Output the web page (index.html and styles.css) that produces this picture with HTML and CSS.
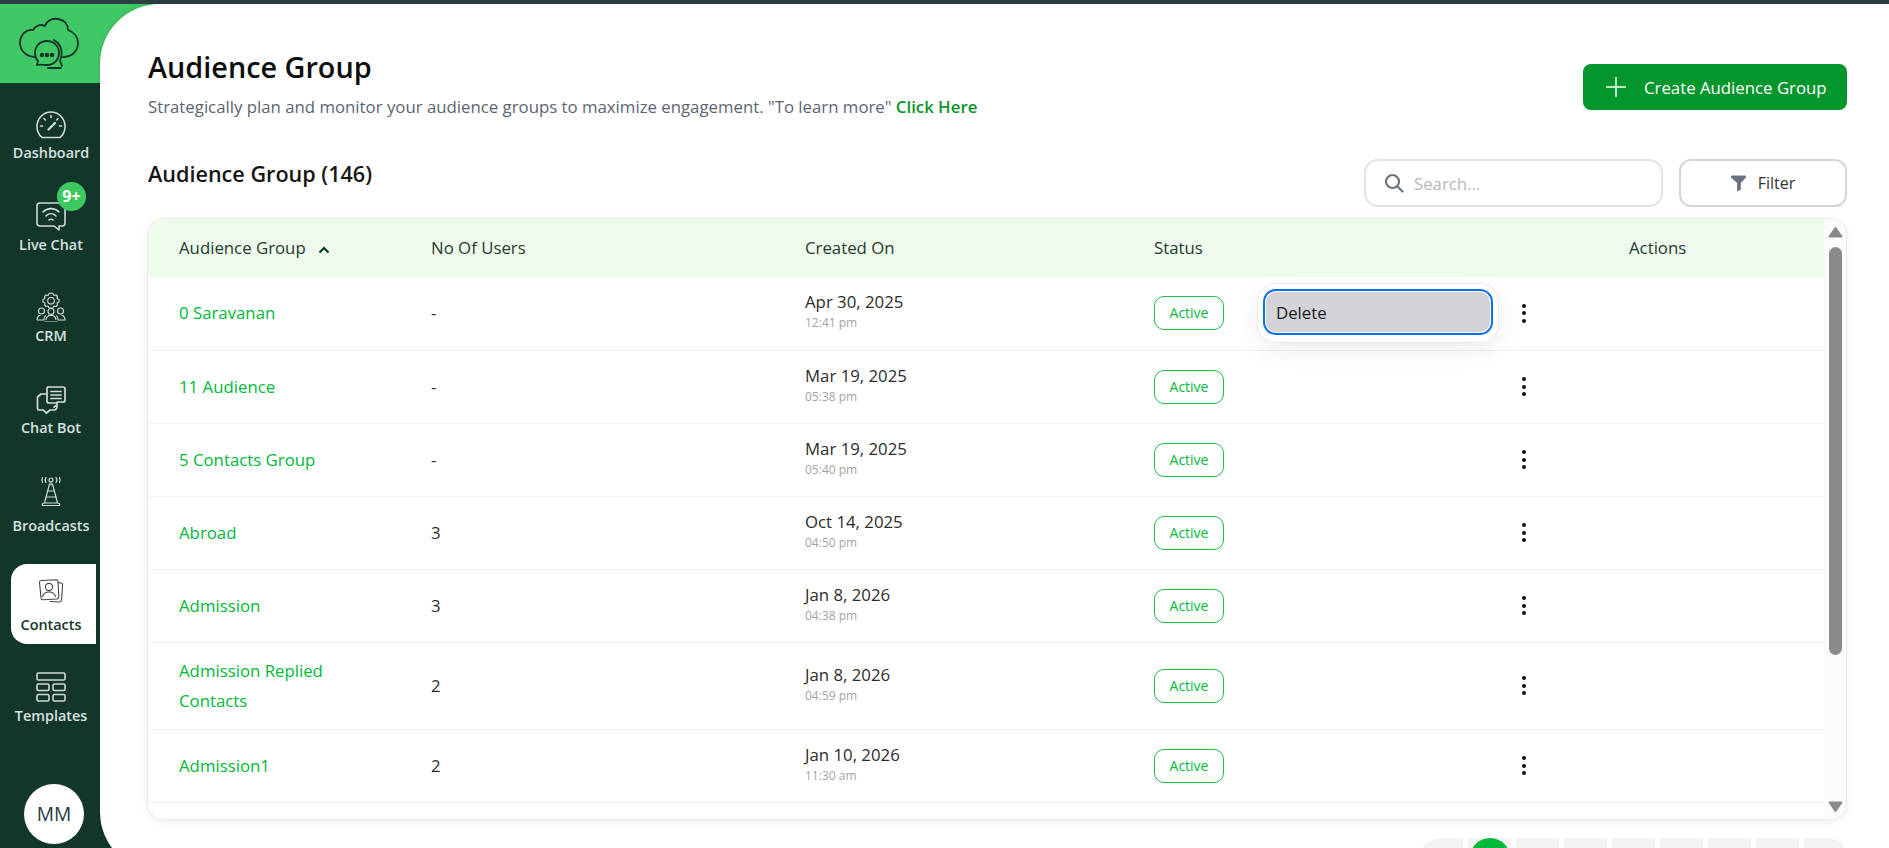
FILE: index.html
```html
<!DOCTYPE html>
<html lang="en">
<head>
    <meta charset="UTF-8">
    <title>Audience Group</title>
    <link rel="stylesheet" href="styles.css">
</head>
<body>
    <div class="top-strip"></div>
    <div class="shell">
        <aside class="sidebar">
            <div class="logo">
                <svg class="logo-icon" width="68" height="60" viewBox="15 14 68 60" fill="none" stroke="#12372a" stroke-width="1.8" stroke-linecap="round" stroke-linejoin="round">
                    <path d="M35 57C26 57 20 50 20 43C20 35 26 29 33 30C36 25 41 24 45 26C47 20 53 18 58 19C65 20 68 25 68 30C74 32 78 37 78 43C78 51 72 57 63 57"/>
                    <path d="M47 41C54 41 59 46 59 53C59 60 54 65 47 65C44 65 41 64 37 65L38 61C36 59 35 56 35 53C35 46 40 41 47 41Z"/>
                    <path d="M54 40C60 43 63 50 61 58L60 61L62 66"/>
                    <path d="M48 68H61"/>
                    <circle cx="42" cy="55" r="1.4" fill="#12372a"/>
                    <circle cx="47" cy="55" r="1.4" fill="#12372a"/>
                    <circle cx="52" cy="55" r="1.4" fill="#12372a"/>
                </svg>
            </div>
            <nav class="nav">
                <a class="nav-item">
                    <span class="nav-icon">
                        <svg width="30" height="28" viewBox="0 0 30 28" fill="none" stroke="currentColor" stroke-width="1.6" stroke-linecap="round">
                            <path d="M6 26.5C3 24 1 20 1 15.5C1 7.5 7.3 1 15 1C22.7 1 29 7.5 29 15.5C29 20 27 24 24 26.5Z"/>
                            <path d="M12.5 18.5L19 12" stroke-width="2.4"/>
                            <path d="M15 4.5V6.5M8 7.5L9.3 9M22 7.5L20.7 9M4.5 15H6.5M23.5 15H25.5"/>
                        </svg>
                    </span>
                    <span class="nav-label">Dashboard</span>
                </a>
                <a class="nav-item">
                    <span class="nav-icon">
                        <svg width="30" height="29" viewBox="0 0 30 29" fill="none" stroke="currentColor" stroke-width="1.6" stroke-linecap="round" stroke-linejoin="round">
                            <path d="M4 1H26C28 1 29 2 29 4V21C29 23 28 24 26 24H23V28L18 24H4C2 24 1 23 1 21V4C1 2 2 1 4 1Z"/>
                            <path d="M7 10C11.500 5.500 18.500 5.500 23 10M10 14C13 11 17 11 20 14M13 18C14 17 16 17 17 18"/>
                        </svg>
                    </span>
                    <span class="nav-label">Live Chat</span>
                    <span class="nav-badge">9+</span>
                </a>
                <a class="nav-item">
                    <span class="nav-icon">
                        <svg width="30" height="30" viewBox="0 0 30 30" fill="none" stroke="currentColor" stroke-width="1.1" stroke-linejoin="round">
                            <path d="M15 1L17 1.500L18 3.500L20 3L21.500 4.500L21 6.500L23 7.500V10L21 11L21.500 13L20 14.500L18 14L17 16H13L12 14L10 14.500L8.500 13L9 11L7 10V7.500L9 6.500L8.500 4.500L10 3L12 3.500L13 1.500Z"/>
                            <circle cx="15" cy="8.800" r="3.300"/>
                            <circle cx="5.500" cy="19" r="3"/>
                            <circle cx="15" cy="19.500" r="3"/>
                            <circle cx="24.500" cy="19" r="3"/>
                            <path d="M1 28C1 25 3 23.500 4.500 23M10 23.500C7.500 24.500 8 27 8 28H1M20 23.500C22.500 24.500 22 27 22 28H29C29 25 27 23.500 25.500 23M8.500 30H21.500M10 28C10 25.500 12 24 13 23.500H17C18 24 20 25.500 20 28"/>
                        </svg>
                    </span>
                    <span class="nav-label">CRM</span>
                </a>
                <a class="nav-item">
                    <span class="nav-icon">
                        <svg width="30" height="28" viewBox="0 0 30 28" fill="none" stroke="currentColor" stroke-width="1.7" stroke-linecap="round" stroke-linejoin="round">
                            <path d="M12 1H27C28.500 1 29 2 29 3V14C29 15.500 28.500 16 27 16H21V19L18 21"/>
                            <path d="M12 1C11 1 11 2 11 3V8H5L1.500 11V22C1.500 23 2 24 3 24H7L10.500 27L14 24H18C20 24 21 22 21 20"/>
                            <path d="M11 8V15C11 16 12 17 13 17H20"/>
                            <path d="M15 5.500H25M15 9H25M15 12.500H25"/>
                        </svg>
                    </span>
                    <span class="nav-label">Chat Bot</span>
                </a>
                <a class="nav-item nav-item-tower">
                    <span class="nav-icon">
                        <svg width="22" height="30" viewBox="0 0 22 30" fill="none" stroke="currentColor" stroke-width="1.2" stroke-linecap="round" stroke-linejoin="round">
                            <circle cx="11" cy="4" r="2"/>
                            <path d="M6 1.500C5 3 5 5 6 6.500M16 1.500C17 3 17 5 16 6.500M2.500 1.500C1.800 3 1.800 5 2.500 6.500M19.500 1.500C20.200 3 20.200 5 19.500 6.500"/>
                            <path d="M11 6V9M9.500 8L4.500 27M12.500 8L17.500 27M2.500 29.500H19.500C20 27.500 19 27 17.500 27H4.500C3 27 2 27.500 2.500 29.500Z"/>
                            <path d="M7.500 15H14.500M6 21H16"/>
                        </svg>
                    </span>
                    <span class="nav-label">Broadcasts</span>
                </a>
                <a class="nav-item nav-item-active">
                    <span class="nav-icon">
                        <svg width="26" height="24" viewBox="0 0 26 24" fill="none" stroke="#444" stroke-width="1.1" stroke-linecap="round" stroke-linejoin="round">
                            <path d="M3 1.500L18 0.800C19 0.800 20 1.500 20 2.500L20.800 18C20.800 19 20 20 19 20L5 20.800C4 20.800 3 20 3 19L1.500 3.500C1.500 2.500 2 1.500 3 1.500Z"/>
                            <path d="M20 3.500L23 4C24 4.200 24.800 5 24.600 6L23.500 21C23.300 22.500 22.500 23 21.500 23L12 22.500"/>
                            <circle cx="11" cy="8" r="3.600"/>
                            <path d="M4.500 17.500C5.500 14 8 13 11 13C14 13 16.500 14 17.500 17.500"/>
                        </svg>
                    </span>
                    <span class="nav-label">Contacts</span>
                </a>
                <a class="nav-item nav-item-last">
                    <span class="nav-icon">
                        <svg width="30" height="30" viewBox="0 0 30 30" fill="none" stroke="currentColor" stroke-width="1.6" stroke-linejoin="round">
                            <rect x="1" y="1" width="28" height="7" rx="1.500"/>
                            <rect x="1" y="12" width="12" height="6.500" rx="1.500"/>
                            <rect x="17" y="12" width="12" height="6.500" rx="1.500"/>
                            <rect x="1" y="22.500" width="12" height="6.500" rx="1.500"/>
                            <rect x="17" y="22.500" width="12" height="6.500" rx="1.500"/>
                        </svg>
                    </span>
                    <span class="nav-label">Templates</span>
                </a>
            </nav>
            <div class="avatar">MM</div>
        </aside>

        <main class="main">
            <header class="page-head">
                <div>
                    <h1>Audience Group</h1>
                    <p class="subtitle">Strategically plan and monitor your audience groups to maximize engagement. "To learn more" <a class="learn-link">Click Here</a></p>
                </div>
                <button class="create-btn">
                    <svg width="20" height="20" viewBox="0 0 20 20" stroke="#fff" stroke-width="1.500"><path d="M10 0V20M0 10H20"/></svg>
                    Create Audience Group
                </button>
            </header>

            <div class="toolbar">
                <h2>Audience Group (146)</h2>
                <div class="toolbar-right">
                    <div class="search-box">
                        <svg width="20" height="20" viewBox="0 0 20 20" fill="none" stroke="#6b7280" stroke-width="2.200" stroke-linecap="round"><circle cx="8.500" cy="8.500" r="6.500"/><path d="M13.500 13.500L18.500 18.500"/></svg>
                        <span class="placeholder">Search...</span>
                    </div>
                    <button class="filter-btn">
                        <svg width="15" height="17" viewBox="0 0 16 17" fill="#6b7280"><path d="M1 0H15C16 0 16.500 1 16 2L10.500 8V15L6.500 17V8L0 2C-0.500 1 0 0 1 0Z"/></svg>
                        Filter
                    </button>
                </div>
            </div>

            <div class="table-card">
                <div class="table-wrap">
                    <table class="groups">
                        <colgroup>
                            <col class="col-name">
                            <col class="col-users">
                            <col class="col-created">
                            <col class="col-status">
                            <col>
                        </colgroup>
                        <thead>
                            <tr>
                                <th class="name-cell">Audience Group
                                    <svg class="sort-icon" width="12" height="8" viewBox="0 0 12 8" fill="none" stroke="#12372a" stroke-width="2.200"><path d="M1.500 6.500L6 2L10.500 6.500"/></svg>
                                </th>
                                <th>No Of Users</th>
                                <th>Created On</th>
                                <th>Status</th>
                                <th class="actions-head">Actions</th>
                            </tr>
                        </thead>
                        <tbody>
                            <tr>
                                <td class="name-cell"><a>0 Saravanan</a></td>
                                <td>-</td>
                                <td><div class="date">Apr 30, 2025</div><div class="time">12:41 pm</div></td>
                                <td class="status-cell">
                                    <span class="badge">Active</span>
                                    <div class="row-menu"><button class="menu-item">Delete</button></div>
                                </td>
                                <td class="kebab-cell"><span class="kebab"><i></i><i></i><i></i></span></td>
                            </tr>
                            <tr>
                                <td class="name-cell"><a>11 Audience</a></td>
                                <td>-</td>
                                <td><div class="date">Mar 19, 2025</div><div class="time">05:38 pm</div></td>
                                <td class="status-cell"><span class="badge">Active</span></td>
                                <td class="kebab-cell"><span class="kebab"><i></i><i></i><i></i></span></td>
                            </tr>
                            <tr>
                                <td class="name-cell"><a>5 Contacts Group</a></td>
                                <td>-</td>
                                <td><div class="date">Mar 19, 2025</div><div class="time">05:40 pm</div></td>
                                <td class="status-cell"><span class="badge">Active</span></td>
                                <td class="kebab-cell"><span class="kebab"><i></i><i></i><i></i></span></td>
                            </tr>
                            <tr>
                                <td class="name-cell"><a>Abroad</a></td>
                                <td>3</td>
                                <td><div class="date">Oct 14, 2025</div><div class="time">04:50 pm</div></td>
                                <td class="status-cell"><span class="badge">Active</span></td>
                                <td class="kebab-cell"><span class="kebab"><i></i><i></i><i></i></span></td>
                            </tr>
                            <tr>
                                <td class="name-cell"><a>Admission</a></td>
                                <td>3</td>
                                <td><div class="date">Jan 8, 2026</div><div class="time">04:38 pm</div></td>
                                <td class="status-cell"><span class="badge">Active</span></td>
                                <td class="kebab-cell"><span class="kebab"><i></i><i></i><i></i></span></td>
                            </tr>
                            <tr>
                                <td class="name-cell"><a>Admission Replied Contacts</a></td>
                                <td>2</td>
                                <td><div class="date">Jan 8, 2026</div><div class="time">04:59 pm</div></td>
                                <td class="status-cell"><span class="badge">Active</span></td>
                                <td class="kebab-cell"><span class="kebab"><i></i><i></i><i></i></span></td>
                            </tr>
                            <tr>
                                <td class="name-cell"><a>Admission1</a></td>
                                <td>2</td>
                                <td><div class="date">Jan 10, 2026</div><div class="time">11:30 am</div></td>
                                <td class="status-cell"><span class="badge">Active</span></td>
                                <td class="kebab-cell"><span class="kebab"><i></i><i></i><i></i></span></td>
                            </tr>
                        </tbody>
                    </table>
                </div>
                <div class="scrollbar">
                    <svg width="15" height="12" viewBox="0 0 15 12" fill="#8a8a8a" stroke="#8a8a8a" stroke-width="2" stroke-linejoin="round"><path d="M7.500 2L13.500 10.500H1.500Z"/></svg>
                    <div class="scroll-thumb"></div>
                    <svg class="scroll-down" width="15" height="12" viewBox="0 0 15 12" fill="#8a8a8a" stroke="#8a8a8a" stroke-width="2" stroke-linejoin="round"><path d="M7.500 10L13.500 1.500H1.500Z"/></svg>
                </div>
            </div>

            <div class="pagination">
                <span class="page-item page-first"></span>
                <span class="page-item"><b class="page-current"></b></span>
                <span class="page-item"></span>
                <span class="page-item"></span>
                <span class="page-item"></span>
                <span class="page-item"></span>
                <span class="page-item"></span>
                <span class="page-item"></span>
                <span class="page-item page-last"></span>
            </div>
        </main>
    </div>
</body>
</html>
```

FILE: styles.css
```css
* {
    margin: 0;
    padding: 0;
    box-sizing: border-box;
    font-family: 'Open Sans', sans-serif;
}

html, body {
    height: 100%;
    overflow: hidden;
}

body {
    background-color: #12372a;
    color: #2b2b2b;
}

.top-strip {
    height: 4px;
    background-color: #2b3f45;
}

.shell {
    display: flex;
    height: 868px;
}

/* Sidebar */
.sidebar {
    width: 100px;
    height: 844px;
    flex: none;
    display: flex;
    flex-direction: column;
    background-color: #12372a;
}

.logo {
    width: 170px;
    height: 79px;
    flex: none;
    padding: 10px 0 0 15px;
    background-color: #41c866;
}

.logo-icon {
    display: block;
}

.nav {
    display: flex;
    flex-direction: column;
    gap: 11.7px;
    padding: 16px 0 0 11px;
}

.nav-item {
    position: relative;
    display: flex;
    flex-direction: column;
    align-items: center;
    width: 85px;
    height: 80px;
    padding: 10px 5px 0 0;
    gap: 5px;
    color: #d3d9d6;
}

.nav-icon {
    display: flex;
    align-items: flex-end;
    justify-content: center;
    height: 30px;
}

.nav-label {
    font-size: 14.4px;
    font-weight: 600;
    line-height: 18px;
    white-space: nowrap;
    color: #d8e0e0;
}

.nav-badge {
    position: absolute;
    top: -9px;
    left: 46px;
    width: 29px;
    height: 29px;
    border-radius: 50%;
    background-color: #3cc95f;
    color: #fff;
    font-size: 16px;
    font-weight: 700;
    line-height: 29px;
    text-align: center;
}

.nav-item-tower {
    gap: 11px;
}

.nav-item-active {
    margin-top: 7px;
    padding-top: 12px;
    gap: 10px;
    background-color: #fff;
    border-radius: 16px 0 0 16px;
}

.nav-item-active .nav-icon {
    align-items: center;
}

.nav-item-active .nav-label {
    color: #12372a;
}

.nav-item-last {
    padding-top: 16px;
}

.avatar {
    width: 60px;
    height: 60px;
    margin: auto 0 4px 24px;
    border-radius: 50%;
    background-color: #fff;
    color: #1f3a44;
    font-size: 19.2px;
    line-height: 60px;
    text-align: center;
}

/* Main area */
.main {
    position: relative;
    z-index: 1;
    flex: 1;
    display: flex;
    flex-direction: column;
    min-width: 0;
    padding: 44px 42px 0 47px;
    background-color: #fff;
    border-radius: 60px 0 0 60px;
    box-shadow: 0 0 4px rgba(0,0,0,0.15);
}

.page-head {
    display: flex;
    justify-content: space-between;
    align-items: flex-start;
    padding-left: 1px;
}

h1 {
    font-size: 28.8px;
    font-weight: 600;
    line-height: 38px;
    color: #0d0d0d;
}

.subtitle {
    margin-top: 9px;
    font-size: 16.8px;
    line-height: 24px;
    color: #5b6472;
}

.learn-link {
    color: #08962c;
    font-weight: 600;
}

.create-btn {
    display: flex;
    align-items: center;
    gap: 18px;
    width: 264px;
    height: 46px;
    margin-top: 16px;
    padding-left: 23px;
    border: none;
    border-radius: 8px;
    background-color: #03962c;
    color: #fff;
    font-size: 16.8px;
    font-weight: 500;
}

.toolbar {
    display: flex;
    justify-content: space-between;
    align-items: flex-start;
    margin-top: 40px;
    padding-left: 1px;
}

h2 {
    font-size: 21.6px;
    font-weight: 600;
    line-height: 29px;
    color: #161616;
}

.toolbar-right {
    display: flex;
    gap: 16px;
}

.search-box {
    display: flex;
    align-items: center;
    gap: 10px;
    width: 299px;
    height: 48px;
    padding-left: 18px;
    border: 2px solid #e4e4e7;
    border-radius: 14px;
    background-color: #fff;
}

.placeholder {
    font-size: 16.8px;
    color: #b8b8b8;
}

.filter-btn {
    display: flex;
    align-items: center;
    justify-content: center;
    gap: 12px;
    width: 168px;
    height: 48px;
    border: 2px solid #d4d4da;
    border-radius: 12px;
    background-color: #fff;
    color: #333;
    font-size: 16px;
}

/* Table */
.table-card {
    display: flex;
    height: 602px;
    margin-top: 11px;
    flex: none;
    background-color: #fff;
    border: 1px solid #ececec;
    border-radius: 16px;
    box-shadow: 0 2px 10px rgba(0,0,0,0.07);
    overflow: hidden;
}

.table-wrap {
    flex: 1;
    min-width: 0;
}

.groups {
    width: 100%;
    table-layout: fixed;
    border-collapse: collapse;
}

.col-name { width: 283px; }
.col-users { width: 374px; }
.col-created { width: 349px; }
.col-status { width: 356px; }

th {
    height: 58px;
    padding-bottom: 2px;
    background-color: #eefaec;
    color: #1e3a2f;
    font-size: 16.8px;
    font-weight: 400;
    text-align: left;
}

td {
    height: 73px;
    padding: 13px 0;
    border-bottom: 1px solid #f0f0f0;
    font-size: 16.8px;
    line-height: 30px;
    color: #2b2b2b;
}

.name-cell {
    padding-left: 31px;
    padding-right: 90px;
}

th.name-cell {
    padding-right: 0;
}

.name-cell a {
    color: #00b938;
}

.sort-icon {
    margin-left: 8px;
}

.actions-head {
    padding-left: 119px;
}

.date {
    line-height: 24px;
}

.time {
    padding-bottom: 4px;
    font-size: 12px;
    line-height: 18px;
    color: #a3a3a3;
}

.status-cell {
    position: relative;
}

.badge {
    display: block;
    width: 70px;
    height: 34px;
    border: 1px solid #1dbf4a;
    border-radius: 10px;
    color: #00b938;
    font-size: 14px;
    line-height: 32px;
    text-align: center;
}

.row-menu {
    position: absolute;
    top: 7px;
    left: 104px;
    width: 240px;
    height: 58px;
    padding: 8px;
    background-color: #fff;
    border-radius: 18px;
    box-shadow: 0 0 0 1px #ececec, 0 8px 24px rgba(0,0,0,0.08);
}

.menu-item {
    display: block;
    width: 100%;
    height: 40px;
    padding-left: 10px;
    border: none;
    border-radius: 10px;
    outline: 2.5px solid #0b6fe8;
    outline-offset: 1px;
    background-color: #d4d3d8;
    color: #1a1a22;
    font-size: 16.8px;
    text-align: left;
}

.kebab-cell {
    padding-left: 12px;
}

.kebab {
    display: flex;
    flex-direction: column;
    gap: 3.500px;
    width: 4px;
}

.kebab i {
    display: block;
    width: 4px;
    height: 4px;
    border-radius: 50%;
    background-color: #111;
}

.scrollbar {
    display: flex;
    flex-direction: column;
    align-items: center;
    flex: none;
    width: 22px;
    padding: 7px 0 6px;
    background-color: #fbfbfb;
}

.scroll-thumb {
    width: 13px;
    height: 408px;
    margin-top: 9px;
    border-radius: 7px;
    background-color: #8a8a8a;
}

.scroll-down {
    margin-top: auto;
}

/* Pagination, mostly below the fold */
.pagination {
    display: flex;
    justify-content: flex-end;
    gap: 5px;
    height: 40px;
    margin-top: 18px;
    flex: none;
}

.page-item {
    display: flex;
    justify-content: center;
    width: 43px;
    background-color: #f3f3f3;
}

.page-first {
    border-radius: 20px 0 0 20px;
}

.page-last {
    border-radius: 0 20px 20px 0;
}

.page-current {
    display: block;
    width: 40px;
    height: 40px;
    border-radius: 50%;
    background-color: #00b938;
}
```
